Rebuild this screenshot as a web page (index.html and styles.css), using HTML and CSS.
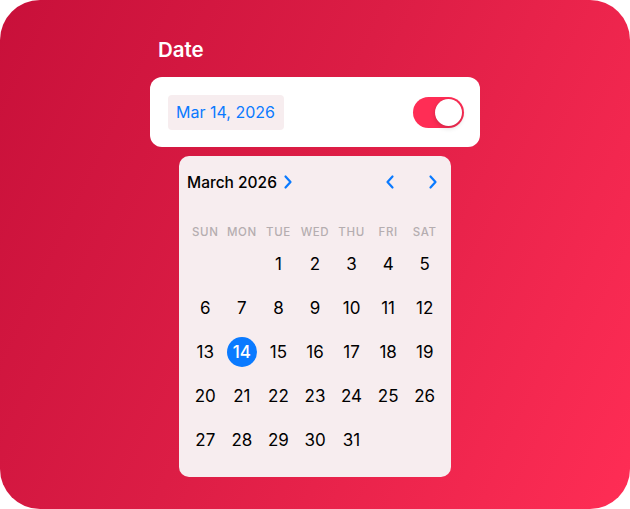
FILE: index.html
```html
<!DOCTYPE html>
<html>
<head>
<meta charset="utf-8">
<link rel="stylesheet" href="styles.css">
</head>
<body>
<div class="stage">
  <div class="panel">
    <div class="title">Date</div>
    <div class="card">
      <div class="chip">Mar 14, 2026</div>
      <div class="toggle"><div class="knob"></div></div>
    </div>
    <div class="calendar">
      <div class="cal-head">
        <div class="month">March 2026
          <svg class="mchev" width="10" height="16" viewBox="0 0 10 16"><path d="M2.5 2.5 L7.5 8 L2.5 13.5" fill="none" stroke="#0A7AFF" stroke-width="2.2" stroke-linecap="round" stroke-linejoin="round"/></svg>
        </div>
        <div class="nav">
          <svg width="12" height="16" viewBox="0 0 12 16"><path d="M8.5 2.5 L3.5 8 L8.5 13.5" fill="none" stroke="#0A7AFF" stroke-width="2.2" stroke-linecap="round" stroke-linejoin="round"/></svg>
          <svg width="12" height="16" viewBox="0 0 12 16"><path d="M3.5 2.5 L8.5 8 L3.5 13.5" fill="none" stroke="#0A7AFF" stroke-width="2.2" stroke-linecap="round" stroke-linejoin="round"/></svg>
        </div>
      </div>
      <div class="weekdays">
        <span>SUN</span><span>MON</span><span>TUE</span><span>WED</span><span>THU</span><span>FRI</span><span>SAT</span>
      </div>
      <div class="days">
        <span></span><span></span><span>1</span><span>2</span><span>3</span><span>4</span><span>5</span>
        <span>6</span><span>7</span><span>8</span><span>9</span><span>10</span><span>11</span><span>12</span>
        <span>13</span><span class="sel"><b>14</b></span><span>15</span><span>16</span><span>17</span><span>18</span><span>19</span>
        <span>20</span><span>21</span><span>22</span><span>23</span><span>24</span><span>25</span><span>26</span>
        <span>27</span><span>28</span><span>29</span><span>30</span><span>31</span><span></span><span></span>
      </div>
    </div>
  </div>
</div>
</body>
</html>
```
FILE: styles.css
```css
html, body {
  margin: 0;
  padding: 0;
  background: #ffffff;
}
.stage {
  width: 630px;
  height: 509px;
  border-radius: 40px;
  background: linear-gradient(115deg, #c8103a 0%, #dc1d45 45%, #ff2d55 100%);
  font-family: Inter, "Noto Sans", sans-serif;
  display: flex;
  justify-content: center;
  overflow: hidden;
}
.panel {
  width: 330px;
  display: flex;
  flex-direction: column;
  align-items: center;
  padding-top: 36px;
}
.title {
  align-self: stretch;
  padding-left: 8px;
  color: #ffffff;
  font-size: 20.5px;
  font-weight: 600;
  line-height: 28px;
  margin-bottom: 13px;
}
.card {
  align-self: stretch;
  height: 70px;
  background: #ffffff;
  border-radius: 12px;
  display: flex;
  align-items: center;
  justify-content: space-between;
  padding: 0 16px 0 18px;
  box-sizing: border-box;
}
.chip {
  background: #f7edef;
  color: #0a7aff;
  font-size: 16px;
  line-height: 35px;
  height: 35px;
  padding: 0 9px 0 8px;
  border-radius: 4px;
}
.toggle {
  width: 51px;
  height: 31px;
  border-radius: 16px;
  background: #ff2d55;
  display: flex;
  align-items: center;
  justify-content: flex-end;
  padding: 2px;
  box-sizing: border-box;
}
.knob {
  width: 27px;
  height: 27px;
  border-radius: 50%;
  background: #ffffff;
  box-shadow: 0 2px 5px rgba(0,0,0,0.18), 0 0 1px rgba(0,0,0,0.1);
}
.calendar {
  margin-top: 9px;
  width: 272px;
  background: #f7edef;
  border-radius: 10px;
  padding: 4px 8px 15px;
  box-sizing: border-box;
}
.cal-head {
  height: 44px;
  display: flex;
  align-items: center;
  justify-content: space-between;
  margin-bottom: 17px;
}
.month {
  font-size: 15.5px;
  font-weight: 500;
  color: #000000;
  display: flex;
  align-items: center;
  gap: 6px;
}
.nav {
  display: flex;
  align-items: center;
  gap: 31px;
  padding-right: 4px;
}
.nav svg, .mchev {
  display: block;
}
.weekdays {
  display: grid;
  grid-template-columns: repeat(7, 1fr);
  height: 21px;
  align-items: center;
  text-align: center;
  font-size: 11.5px;
  font-weight: 500;
  letter-spacing: 0.6px;
  color: #b5adb0;
}
.days {
  display: grid;
  grid-template-columns: repeat(7, 1fr);
  grid-auto-rows: 44px;
}
.days span {
  display: flex;
  align-items: center;
  justify-content: center;
  font-size: 17px;
  color: #000000;
}
.days .sel b {
  width: 30px;
  height: 30px;
  border-radius: 50%;
  background: #0a7aff;
  color: #ffffff;
  font-weight: 500;
  display: flex;
  align-items: center;
  justify-content: center;
}
```
